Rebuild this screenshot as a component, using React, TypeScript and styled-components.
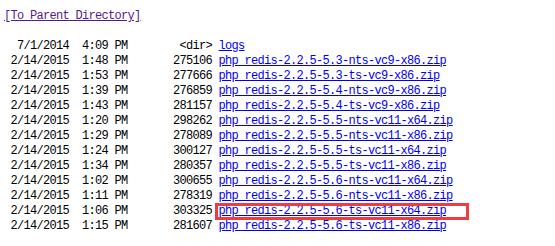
import React from 'react'
import styled, { createGlobalStyle, css } from 'styled-components'

type IEntry = {
  date: string,
  time: string,
  size: string,
  name: string,
  marked?: boolean
}

const entries: IEntry[] = [
  { date: '7/1/2014', time: '4:09 PM', size: '<dir>', name: 'logs' },
  { date: '2/14/2015', time: '1:48 PM', size: '275106', name: 'php_redis-2.2.5-5.3-nts-vc9-x86.zip' },
  { date: '2/14/2015', time: '1:53 PM', size: '277666', name: 'php_redis-2.2.5-5.3-ts-vc9-x86.zip' },
  { date: '2/14/2015', time: '1:39 PM', size: '276859', name: 'php_redis-2.2.5-5.4-nts-vc9-x86.zip' },
  { date: '2/14/2015', time: '1:43 PM', size: '281157', name: 'php_redis-2.2.5-5.4-ts-vc9-x86.zip' },
  { date: '2/14/2015', time: '1:20 PM', size: '298262', name: 'php_redis-2.2.5-5.5-nts-vc11-x64.zip' },
  { date: '2/14/2015', time: '1:29 PM', size: '278089', name: 'php_redis-2.2.5-5.5-nts-vc11-x86.zip' },
  { date: '2/14/2015', time: '1:24 PM', size: '300127', name: 'php_redis-2.2.5-5.5-ts-vc11-x64.zip' },
  { date: '2/14/2015', time: '1:34 PM', size: '280357', name: 'php_redis-2.2.5-5.5-ts-vc11-x86.zip' },
  { date: '2/14/2015', time: '1:02 PM', size: '300655', name: 'php_redis-2.2.5-5.6-nts-vc11-x64.zip' },
  { date: '2/14/2015', time: '1:11 PM', size: '278319', name: 'php_redis-2.2.5-5.6-nts-vc11-x86.zip' },
  { date: '2/14/2015', time: '1:06 PM', size: '303325', name: 'php_redis-2.2.5-5.6-ts-vc11-x64.zip', marked: true },
  { date: '2/14/2015', time: '1:15 PM', size: '281607', name: 'php_redis-2.2.5-5.6-ts-vc11-x86.zip' }
]

const GlobalStyle = createGlobalStyle`
  html, body {
    margin: 0;
    padding: 0;
    background: #ffffff;
  }
`

const App = () => {
  const renderEntries = () => entries.map((entry: IEntry) => (
    <Row key={entry.name}>
      {entry.date.padStart(10)}{'  '}{entry.time}{entry.size.padStart(13)}{' '}
      <FileLink href="#" marked={!!entry.marked}>{entry.name}</FileLink>
    </Row>
  ))

  return (
    <>
      <GlobalStyle />
      <Listing>
        <Row>
          <ParentLink href="#">[To Parent Directory]</ParentLink>
        </Row>
        <Row />
        {renderEntries()}
      </Listing>
    </>
  )
}

const Listing = styled.div`
  display: flex;
  flex-direction: column;
  padding: 9px 0 0 4px;
  font-family: "Liberation Mono", "DejaVu Sans Mono", monospace;
  font-size: 12px;
  letter-spacing: -0.7px;
  color: #000000;
`

const Row = styled.div`
  height: 15px;
  line-height: 15px;
  white-space: pre;
`

const ParentLink = styled.a`
  color: #551a8b;
  text-decoration: underline;
`

type FileLinkProps = {
  marked: boolean
}

const FileLink = styled.a<FileLinkProps>`
  position: relative;
  color: #0000ee;
  text-decoration: underline;

  ${({ marked }) => marked && css`
    &::after {
      content: '';
      position: absolute;
      left: -4px;
      top: -1px;
      width: 254px;
      height: 17px;
      border: 3px solid #f03c3c;
      box-sizing: border-box;
    }
  `}
`

export default App
